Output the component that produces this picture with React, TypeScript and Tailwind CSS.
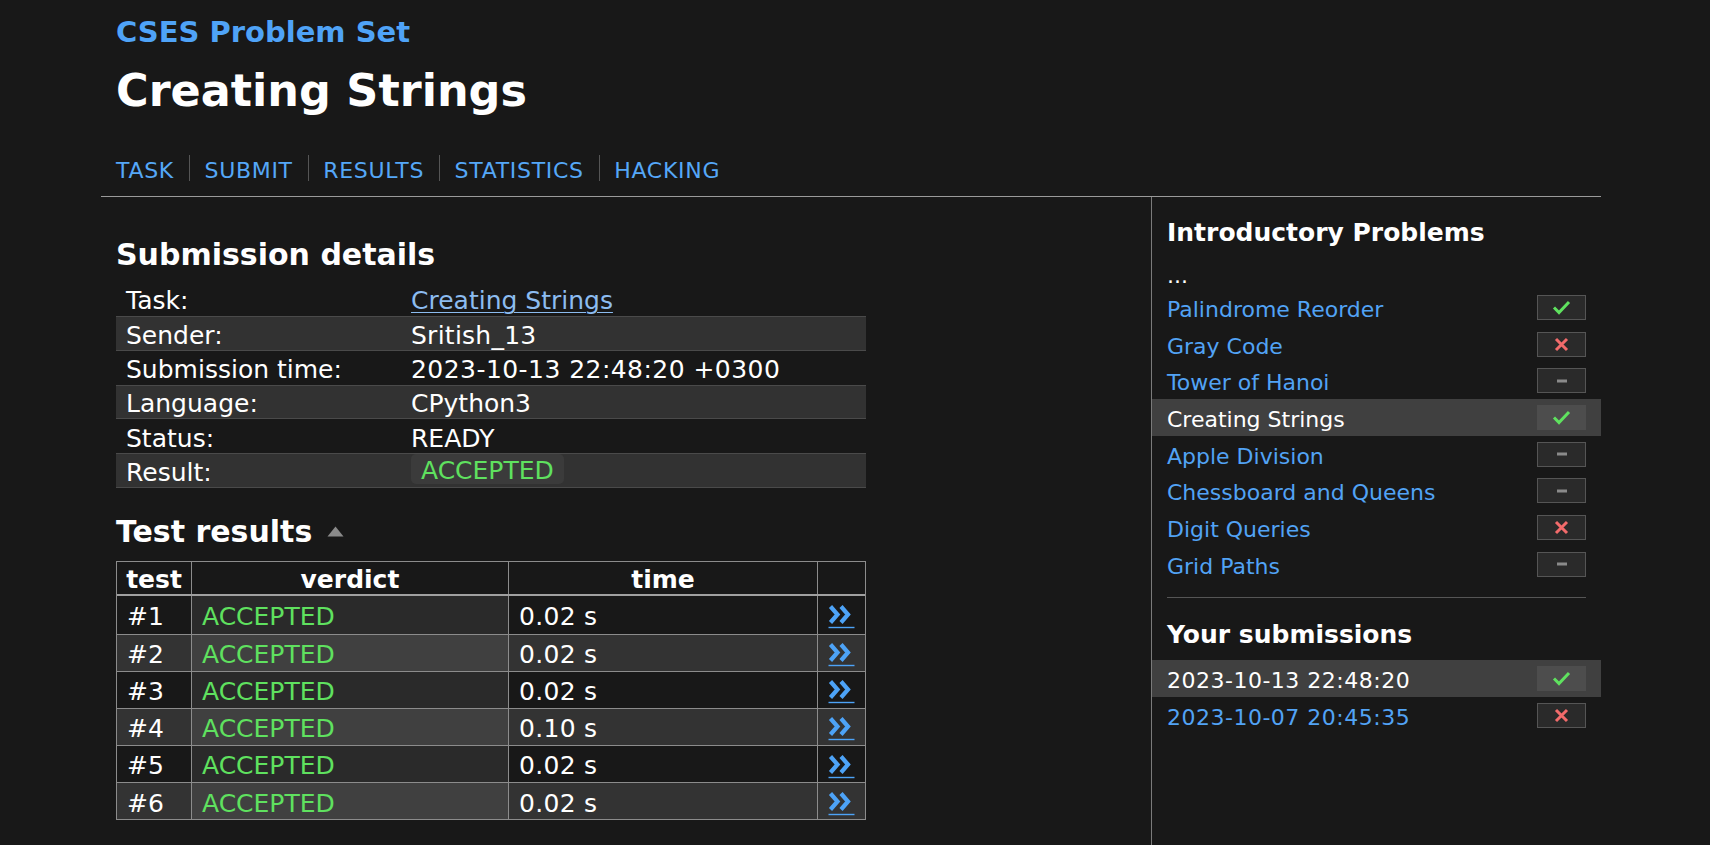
import React from "react";

type Status = "ok" | "fail" | "none";

function Check() {
  return (
    <svg width="19" height="15" viewBox="0 0 19 15">
      <path d="M2 7.5 L7 12.5 L17 2" fill="none" stroke="#5fe15f" strokeWidth="3" />
    </svg>
  );
}
function Cross() {
  return (
    <svg width="15" height="15" viewBox="0 0 15 15">
      <path d="M2 2 L13 13 M13 2 L2 13" fill="none" stroke="#f26b6b" strokeWidth="3" />
    </svg>
  );
}
function Minus() {
  return (
    <svg width="10" height="4" viewBox="0 0 10 4">
      <path d="M0 2 L10 2" fill="none" stroke="#8a8a8a" strokeWidth="3" />
    </svg>
  );
}

function StatusBox({ s, active }: { s: Status; active?: boolean }) {
  return (
    <div
      className={
        active
          ? "w-[49px] h-[25px] flex items-center justify-center bg-[#4d4d4d] border border-[#4d4d4d]"
          : "w-[49px] h-[25px] flex items-center justify-center bg-[#2a2a2a] border border-[#555555]"
      }
    >
      {s === "ok" ? <Check /> : s === "fail" ? <Cross /> : <Minus />}
    </div>
  );
}

function Chevrons() {
  return (
    <svg width="27" height="24" viewBox="0 0 27 24">
      <path d="M2.5 1.5 L9.5 9.5 L2.5 17.5" fill="none" stroke="#4da3f7" strokeWidth="4.2" />
      <path d="M13 1.5 L20 9.5 L13 17.5" fill="none" stroke="#4da3f7" strokeWidth="4.2" />
      <path d="M0.5 22.5 L26.5 22.5" fill="none" stroke="#4da3f7" strokeWidth="1.4" />
    </svg>
  );
}

const problems: { name: string; s: Status; active?: boolean }[] = [
  { name: "Palindrome Reorder", s: "ok" },
  { name: "Gray Code", s: "fail" },
  { name: "Tower of Hanoi", s: "none" },
  { name: "Creating Strings", s: "ok", active: true },
  { name: "Apple Division", s: "none" },
  { name: "Chessboard and Queens", s: "none" },
  { name: "Digit Queries", s: "fail" },
  { name: "Grid Paths", s: "none" },
];

const details: { label: string; value: React.ReactNode; shaded: boolean; badge?: boolean }[] = [
  {
    label: "Task:",
    value: (
      <a href="#" className="text-[#8cbcf0] underline underline-offset-[3px] decoration-1">
        Creating Strings
      </a>
    ),
    shaded: false,
  },
  { label: "Sender:", value: <span className="tracking-[0.25px]">Sritish_13</span>, shaded: true },
  {
    label: "Submission time:",
    value: <span className="tracking-[0.45px]">2023-10-13 22:48:20 +0300</span>,
    shaded: false,
  },
  { label: "Language:", value: "CPython3", shaded: true },
  { label: "Status:", value: "READY", shaded: false },
  {
    label: "Result:",
    value: (
      <span className="inline-flex items-center h-[30px] px-[10px] pt-[3px] rounded-[5px] bg-[#3b3b3b] text-[#5fe15f]">
        ACCEPTED
      </span>
    ),
    shaded: true,
    badge: true,
  },
];

const tests = [
  { n: "#1", t: "0.02 s" },
  { n: "#2", t: "0.02 s" },
  { n: "#3", t: "0.02 s" },
  { n: "#4", t: "0.10 s" },
  { n: "#5", t: "0.02 s" },
  { n: "#6", t: "0.02 s" },
];

export default function App() {
  return (
    <div className="min-h-screen bg-[#181818] text-white font-['DejaVu_Sans',sans-serif]">
      <div className="ml-[101px] w-[1500px]">
        <header className="pl-[15px] pt-[15px]">
          <div className="text-[29px] leading-[34px] font-bold text-[#4fa3f7]">CSES Problem Set</div>
          <h1 className="mt-[15.5px] text-[44.5px] leading-[52px] font-bold">Creating Strings</h1>
          <nav className="mt-[38.2px] flex h-[26.7px] text-[22px] leading-[26.7px] tracking-[0.7px] text-[#55a7f7]">
            <a href="#" className="h-[26.7px] pt-[3px] pr-[15px]">TASK</a>
            <a href="#" className="h-[26.7px] pt-[3px] pl-[14.5px] pr-[15px] border-l border-[#555555]">SUBMIT</a>
            <a href="#" className="h-[26.7px] pt-[3px] pl-[14.5px] pr-[15px] border-l border-[#555555]">RESULTS</a>
            <a href="#" className="h-[26.7px] pt-[3px] pl-[14.5px] pr-[15px] border-l border-[#555555]">STATISTICS</a>
            <a href="#" className="h-[26.7px] pt-[3px] pl-[14.5px] pr-[15px] border-l border-[#555555]">HACKING</a>
          </nav>
        </header>

        <div className="mt-[15px] border-t border-[#9a9a9a] flex">
          <main className="w-[1050px] pl-[15px] pt-[40px] pb-[24px]">
            <h2 className="text-[30px] leading-[35px] font-bold">Submission details</h2>
            <div className="mt-[9.6px] w-[750px] text-[25px]">
              {details.map((d) => (
                <div
                  key={d.label}
                  className={
                    d.shaded
                      ? "flex items-center h-[34.3px] bg-[#323232] border-y border-[#4a4a4a]"
                      : "flex items-center h-[34.3px]"
                  }
                >
                  <div className="w-[285px] pl-[10px] pt-[4px]">{d.label}</div>
                  <div className={d.badge ? "pl-[10px]" : "pl-[10px] pt-[4px]"}>{d.value}</div>
                </div>
              ))}
            </div>

            <h2 className="mt-[26.6px] text-[30px] leading-[35px] font-bold flex items-center">
              Test results
              <svg className="ml-[14.5px]" width="17" height="11" viewBox="0 0 17 11">
                <path d="M8.5 0.5 L16.5 10.5 L0.5 10.5 Z" fill="#8a8a8a" />
              </svg>
            </h2>

            <div className="mt-[11.7px] w-[750px] border border-[#8c8c8c] text-[25px]">
              <div className="flex h-[34.3px] border-b-2 border-[#a0a0a0] font-bold">
                <div className="w-[74px] flex items-center justify-center pt-[4px]">test</div>
                <div className="w-[317px] flex items-center justify-center pt-[4px] border-l border-[#8c8c8c]">verdict</div>
                <div className="w-[309px] flex items-center justify-center pt-[4px] border-l border-[#8c8c8c]">time</div>
                <div className="w-[48px] border-l border-[#8c8c8c]"></div>
              </div>
              {tests.map((t, i) => (
                <div
                  key={t.n}
                  className={
                    (i % 2 === 1 ? "bg-[#333333] " : "bg-[#181818] ") +
                    (i === 0 ? "flex h-[37.2px]" : "flex h-[37.2px] border-t border-[#8c8c8c]")
                  }
                >
                  <div className="w-[74px] flex items-center pl-[10px] pt-[4px]">{t.n}</div>
                  <div
                    className={
                      i % 2 === 1
                        ? "w-[317px] flex items-center pl-[10px] pt-[4px] border-l border-[#8c8c8c] bg-[#404040] text-[#5fe15f]"
                        : "w-[317px] flex items-center pl-[10px] pt-[4px] border-l border-[#8c8c8c] bg-[#2a2a2a] text-[#5fe15f]"
                    }
                  >
                    ACCEPTED
                  </div>
                  <div className="w-[309px] flex items-center pl-[10px] pt-[4px] tracking-[0.3px] border-l border-[#8c8c8c]">{t.t}</div>
                  <div className="w-[48px] flex items-center pl-[10px] pt-[5px] border-l border-[#8c8c8c]">
                    <a href="#" className="block">
                      <Chevrons />
                    </a>
                  </div>
                </div>
              ))}
            </div>
          </main>

          <aside className="flex-1 border-l border-[#7a7a7a] pt-[21px] text-[22px] min-h-[650px]">
            <h3 className="px-[15px] text-[25px] leading-[29px] font-bold">Introductory Problems</h3>
            <div className="px-[15px] mt-[15.4px] leading-[26.2px]">...</div>
            {problems.map((p) => (
              <div
                key={p.name}
                className={
                  p.active
                    ? "flex items-center justify-between h-[36.7px] px-[15px] bg-[#404040]"
                    : "flex items-center justify-between h-[36.7px] px-[15px]"
                }
              >
                <a href="#" className={p.active ? "block pt-[4px] text-white" : "block pt-[4px] text-[#52a3f5]"}>
                  {p.name}
                </a>
                <StatusBox s={p.s} active={p.active} />
              </div>
            ))}
            <div className="mx-[15px] mt-[15px] border-t border-[#555555]"></div>
            <h3 className="mt-[21.6px] px-[15px] text-[25px] leading-[29px] font-bold">Your submissions</h3>
            <div className="mt-[11.2px]">
              <div className="flex items-center justify-between h-[36.7px] px-[15px] bg-[#404040]">
                <span className="block pt-[4px] tracking-[0.5px] text-white">2023-10-13 22:48:20</span>
                <StatusBox s="ok" active />
              </div>
              <div className="flex items-center justify-between h-[36.7px] px-[15px]">
                <a href="#" className="block pt-[4px] tracking-[0.5px] text-[#52a3f5]">2023-10-07 20:45:35</a>
                <StatusBox s="fail" />
              </div>
            </div>
          </aside>
        </div>
      </div>
    </div>
  );
}
